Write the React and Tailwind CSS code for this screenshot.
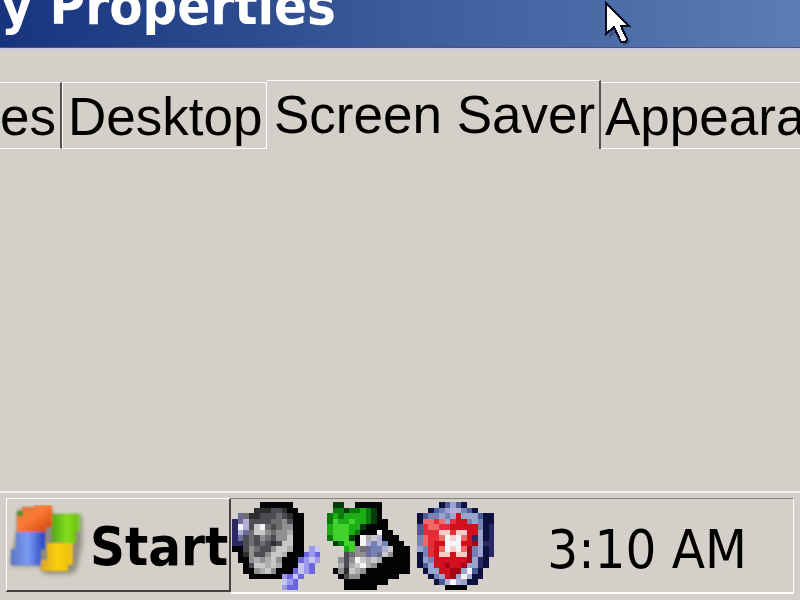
const PALETTE = {
  k: '#030305',
  d: '#2c2e2f',
  D: '#4b4d50',
  g: '#6c6e70',
  G: '#8f9091',
  l: '#adadaf',
  L: '#c9c8ca',
  w: '#f6f4f6',
  n: '#2b2763',
  N: '#0d1140',
  p: '#6d6b99',
  P: '#b3afd8',
  b: '#6a67dd',
  B: '#9d9aed',
  v: '#c8c5f0',
  e: '#063a08',
  E: '#0d7a0d',
  f: '#1cae16',
  F: '#43d22c',
  s: '#7681b4',
  S: '#9aa5cd',
  t: '#4c5a96',
  r: '#d0101c',
  R: '#e62c38',
  o: '#ee6a66',
  m: '#a30616',
  c: '#f6cdc8',
}

const SPEAKER = [
  '.....kkkkkk.....',
  '....dddDDdkk....',
  '.pgddDDDgDdkk...',
  'npPDDDDggGDkk...',
  'nwPDLwgDgGGkk...',
  'nPpgLLGgGGlkk...',
  'npDgDGgDGGLkk...',
  'nnDgDgDdDLLkk...',
  'kkDGgDDGLLlkk.Bv',
  '.kdGDDGLLlkkkbBb',
  '.kkGlGlLGkkkbBvB',
  '..kDLLlLlkkkvBb.',
  '..kkGlLGkkkbvBb.',
  '...kkkkkkBbvb...',
  '.........vBb....',
  '.........Bbb....',
]

const MODEM = [
  '.ee..kkkkk......',
  '.EEeEEfEek......',
  'EfEffffEek......',
  'EFffFffEekk.....',
  'fFFFffekkkk.....',
  'fFFFfEkkkwkk....',
  'EFFFekwlLPkkk...',
  '.eEFFkwPsPskkk..',
  '...fFGgpssPLkkk.',
  '...DgGGpspLGkkk.',
  '..GDGwLlLlkkkkk.',
  '..lDlLwlGkkkkkk.',
  '.kGdLlGkkkkkkkk.',
  '..kDGGkkkkkkk...',
  '...kkkkkkkk.....',
  '...kkkkkk.......',
]

const SHIELD = [
  '....NtStN.....',
  '..NtsSPPstN...',
  'NtssSsSrSSStNN',
  'NooRoSRrrsSsNN',
  'tRooRRrrrrrsNn',
  'tRRRccRccrrSNn',
  'soRRowcwornSNn',
  'soRrrwwwrrmSnn',
  'SsRrowcwomsSNn',
  'NsRrccrccmsSNn',
  'NSsrrrrrrmSnN.',
  'NtSrrmrrmSSnN.',
  '.NSSrrmmSwtN..',
  '..NsSrmSwPNN..',
  '...NtPwPSNN...',
  '.....kkkk.....',
]

function PixelIcon({ rows, label, className }) {
  return (
    <svg
      className={className}
      viewBox={`0 0 ${rows[0].length} ${rows.length}`}
      preserveAspectRatio="none"
      shapeRendering="crispEdges"
      role="img"
      aria-label={label}
    >
      {rows.flatMap((row, y) =>
        row.split('').map((c, x) =>
          c === '.' ? null : <rect key={`${x}-${y}`} x={x} y={y} width="1" height="1" fill={PALETTE[c]} />
        )
      )}
    </svg>
  )
}

function WindowsLogo() {
  return (
    <svg className="h-20 w-20 shrink-0" viewBox="0 0 80 80" aria-hidden="true">
      <defs>
        <linearGradient id="red" x1="0" x2="1" y1="0" y2="1">
          <stop offset="0" stopColor="#d9763c" />
          <stop offset="0.45" stopColor="#fb7a35" />
          <stop offset="1" stopColor="#cf3f0c" />
        </linearGradient>
        <linearGradient id="green" x1="0" x2="1">
          <stop offset="0" stopColor="#4fa916" />
          <stop offset="0.5" stopColor="#86dc22" />
          <stop offset="0.85" stopColor="#6cc80c" />
          <stop offset="1" stopColor="#9cc27c" />
        </linearGradient>
        <linearGradient id="blue" x1="0" x2="1">
          <stop offset="0" stopColor="#5a76c8" />
          <stop offset="0.5" stopColor="#7c9bf5" />
          <stop offset="1" stopColor="#2444bd" />
        </linearGradient>
        <linearGradient id="yellow" x1="0" x2="1">
          <stop offset="0" stopColor="#d9a828" />
          <stop offset="0.5" stopColor="#fbd00c" />
          <stop offset="1" stopColor="#e9be14" />
        </linearGradient>
        <filter id="shadow">
          <feGaussianBlur stdDeviation="2.5" />
        </filter>
        <filter id="soft">
          <feGaussianBlur stdDeviation="0.9" />
        </filter>
      </defs>
      <g filter="url(#shadow)" fill="#77746c" opacity="0.75">
        <path d="M12 5h34v6h29v27l-5 26-6 5H38l-6-8H4V56l5-25z" />
      </g>
      <g filter="url(#soft)">
        <path d="M10 6h5V2h12V0h18v22h-6v5H10z" fill="url(#red)" />
        <path d="M10 6h6v5h-6z" fill="#4f8a2e" />
        <path d="M45 9h29v17h-5v12H56v-1H45z" fill="url(#green)" />
        <path d="M4 44h5V27h29v17h-4v16H4z" fill="url(#blue)" />
        <path d="M40 38h26v22h-5v6H34V55h6z" fill="url(#yellow)" />
      </g>
    </svg>
  )
}

function Cursor() {
  return (
    <svg className="absolute top-0 left-[603px] h-12 w-8" viewBox="0 0 32 48" aria-hidden="true">
      <path d="M5 5l23 22h-8l7 15-6 4-8-14-7 6z" fill="#26365f" opacity="0.5" />
      <path
        d="M3 3v31l8-7 7 15h5l1-3-6-13h8z"
        fill="#fff"
        stroke="#07091c"
        strokeWidth="2"
        shapeRendering="crispEdges"
      />
    </svg>
  )
}

function Tab({ children, selected, className }) {
  return (
    <button
      role="tab"
      aria-selected={!!selected}
      className={`shrink-0 whitespace-nowrap border-white text-left ${className}`}
    >
      {children}
    </button>
  )
}

function App() {
  return (
    <div className="flex min-h-screen flex-col overflow-hidden bg-[#d4cfc8] text-black">
      <header className="relative h-12 shrink-0 border-b border-[#4c5577] bg-linear-to-r from-[#17337d] via-[#3b5b9b] to-[#5c7cb4]">
        <h1 className="-mt-6 pl-px whitespace-nowrap font-['DejaVu_Sans_Condensed','DejaVu_Sans',sans-serif] text-[54px] leading-[60px] font-bold text-white">
          y Properties
        </h1>
        <Cursor />
      </header>

      <main className="flex-1 border-t-2 border-[#cbcbe0] pt-[30px]">
        <div
          role="tablist"
          className="flex items-end overflow-hidden font-['Liberation_Sans',Arial,sans-serif] text-[53px] leading-[64px]"
        >
          <Tab className="h-[67px] w-[62px] border-y border-r-2 border-r-[#55524f] pt-0.5">es</Tab>
          <Tab className="h-[67px] w-[205px] border pt-0.5 pl-[5px]">Desktop</Tab>
          <Tab selected className="h-[69px] w-[334px] border-t border-r-2 border-r-[#55524f] pt-0.5 pb-0.5 pl-[7px]">
            Screen Saver
          </Tab>
          <Tab className="h-[67px] flex-1 border-y pt-0.5 pl-1">Appeara</Tab>
        </div>
      </main>

      <footer className="flex h-[109px] shrink-0 border-t-2 border-[#f4f2ee] pt-[5px] pr-[6px] pb-[6px] pl-[6px] font-['DejaVu_Sans_Condensed','DejaVu_Sans',sans-serif] text-[54px] leading-[64px]">
        <button className="flex h-[94px] w-[225px] shrink-0 items-center border-t border-r-2 border-b-2 border-l border-t-white border-r-[#44423f] border-b-[#44423f] border-l-white font-bold">
          <WindowsLogo />
          <span className="pt-1 pl-[3px]">Start</span>
        </button>
        <div className="flex flex-1 items-start border-t border-r border-b-2 border-t-[#85827e] border-r-white border-b-white pt-[3px]">
          <PixelIcon rows={SPEAKER} label="Volume" className="ml-px h-[88px] w-[88px] shrink-0" />
          <PixelIcon rows={MODEM} label="Safely remove hardware" className="ml-[7px] h-[88px] w-[88px] shrink-0" />
          <PixelIcon rows={SHIELD} label="Security alert" className="ml-[2px] h-[88px] w-[77px] shrink-0" />
          <time className="ml-auto pt-4 pr-[46px] whitespace-nowrap">3:10 AM</time>
        </div>
      </footer>
    </div>
  )
}

export default App
